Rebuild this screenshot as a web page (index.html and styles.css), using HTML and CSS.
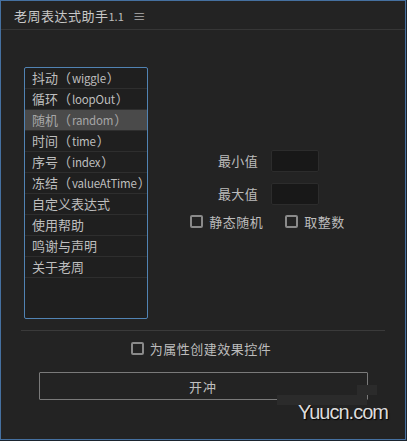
FILE: index.html
```html
<!DOCTYPE html>
<html lang="zh-CN">
<head>
  <meta charset="UTF-8">
  <meta name="viewport" content="width=device-width, initial-scale=1.0">
  <title>老周表达式助手</title>
  <link rel="stylesheet" href="styles.css">
</head>
<body>
  <div class="panel">
    <div class="panel-head">
      <span class="title">老周表达式助手</span><span class="version">1.1</span>
      <span class="menu">≡</span>
    </div>

    <div class="main">
      <ul class="expr-list">
        <li>抖动（<span class="en">wiggle</span>）</li>
        <li>循环（<span class="en">loopOut</span>）</li>
        <li class="active">随机（<span class="en">random</span>）</li>
        <li>时间（<span class="en">time</span>）</li>
        <li>序号（<span class="en">index</span>）</li>
        <li>冻结（<span class="en">valueAtTime</span>）</li>
        <li>自定义表达式</li>
        <li>使用帮助</li>
        <li>鸣谢与声明</li>
        <li>关于老周</li>
      </ul>

      <div class="options">
        <div class="field">
          <label>最小值</label>
          <input type="text" class="num-input">
        </div>
        <div class="field">
          <label>最大值</label>
          <input type="text" class="num-input">
        </div>
        <div class="check-row">
          <span class="check"><span class="box"></span>静态随机</span>
          <span class="check"><span class="box"></span>取整数</span>
        </div>
      </div>
    </div>

    <div class="divider"></div>

    <div class="footer">
      <span class="check"><span class="box"></span>为属性创建效果控件</span>
      <button class="go-btn">开冲</button>
    </div>

    <div class="watermark">
      <span class="wm-block wm-a"></span>
      <span class="wm-block wm-b"></span>
      <span class="wm-text">Yuucn.com</span>
    </div>
  </div>
</body>
</html>
```

FILE: styles.css
```css
body {
  margin: 0;
  background: #1b2530;
  font-family: "Noto Sans CJK SC", "Noto Sans", sans-serif;
}

.panel {
  position: relative;
  width: 406px;
  height: 440px;
  box-sizing: border-box;
  border: 1px solid #4570a0;
  background: #232323;
  color: #bcbcbc;
  overflow: hidden;
}

.panel-head {
  height: 28px;
  padding-left: 13px;
  display: flex;
  align-items: center;
  border-bottom: 1px solid #363636;
}

.title {
  font-size: 13px;
  letter-spacing: 0.5px;
  color: #c8c8c8;
}

.version {
  font-size: 11px;
  color: #bdbdbd;
  margin-top: 2px;
}

.menu {
  font-size: 13px;
  margin-left: 9px;
  color: #b0b0b0;
}

.main {
  display: flex;
  padding: 37px 20px 0 23px;
}

.expr-list {
  list-style: none;
  margin: 0;
  padding: 0;
  width: 124px;
  height: 252px;
  box-sizing: border-box;
  border: 1px solid #5183b3;
  border-radius: 2px;
  background: #1f1f1f;
  overflow: hidden;
}

.expr-list li {
  height: 21px;
  box-sizing: border-box;
  padding-left: 7px;
  font-size: 13px;
  line-height: 20px;
  white-space: nowrap;
  color: #bebebe;
  border-bottom: 1px solid #2e2e2e;
}

.expr-list .en {
  font-size: 11.5px;
  letter-spacing: -0.2px;
  margin: 0 1px;
}

.expr-list li.active {
  background: #4a4a4a;
  color: #a6a6a6;
}

.options {
  flex: 1;
  display: flex;
  flex-direction: column;
  align-items: center;
  justify-content: center;
  padding-bottom: 6px;
}

.field {
  display: flex;
  align-items: center;
  gap: 13px;
  margin-bottom: 11px;
  margin-left: 4px;
}

.field label {
  font-size: 13px;
  letter-spacing: 0.4px;
  color: #bcbcbc;
}

.num-input {
  width: 48px;
  height: 22px;
  box-sizing: border-box;
  border: 1px solid #2c2c2c;
  border-radius: 2px;
  background: #181818;
}

.check-row {
  display: flex;
  gap: 22px;
  margin-top: -4px;
  margin-left: 2px;
}

.check {
  display: inline-flex;
  align-items: center;
  font-size: 13px;
  letter-spacing: 0.5px;
  color: #bcbcbc;
}

.box {
  width: 13px;
  height: 13px;
  box-sizing: border-box;
  border: 2px solid #8a8a8a;
  border-radius: 2px;
  margin-right: 6px;
}

.divider {
  height: 1px;
  margin: 11px 20px 0 20px;
  background: #3a3a3a;
}

.footer {
  display: flex;
  flex-direction: column;
  align-items: center;
  padding-top: 8px;
}

.footer .check {
  margin-right: 4px;
}

.go-btn {
  margin-top: 14px;
  width: 329px;
  height: 28px;
  border: 1px solid #7a7a7a;
  border-radius: 1px;
  background: #232323;
  color: #c0c0c0;
  font-family: inherit;
  font-size: 13px;
  letter-spacing: 1px;
}

.watermark {
  position: absolute;
  left: 0;
  top: 0;
  width: 100%;
  height: 100%;
  pointer-events: none;
}

.wm-block {
  position: absolute;
  background: #2b2b2b;
}

.wm-a {
  left: 276px;
  top: 394px;
  width: 90px;
  height: 10px;
}

.wm-b {
  left: 356px;
  top: 384px;
  width: 20px;
  height: 10px;
}

.wm-text {
  position: absolute;
  left: 297px;
  top: 400px;
  font-family: "Liberation Sans", sans-serif;
  font-size: 20px;
  letter-spacing: -1px;
  color: #dcdcdc;
  text-shadow: 1px 1px 1px #000;
}
```
